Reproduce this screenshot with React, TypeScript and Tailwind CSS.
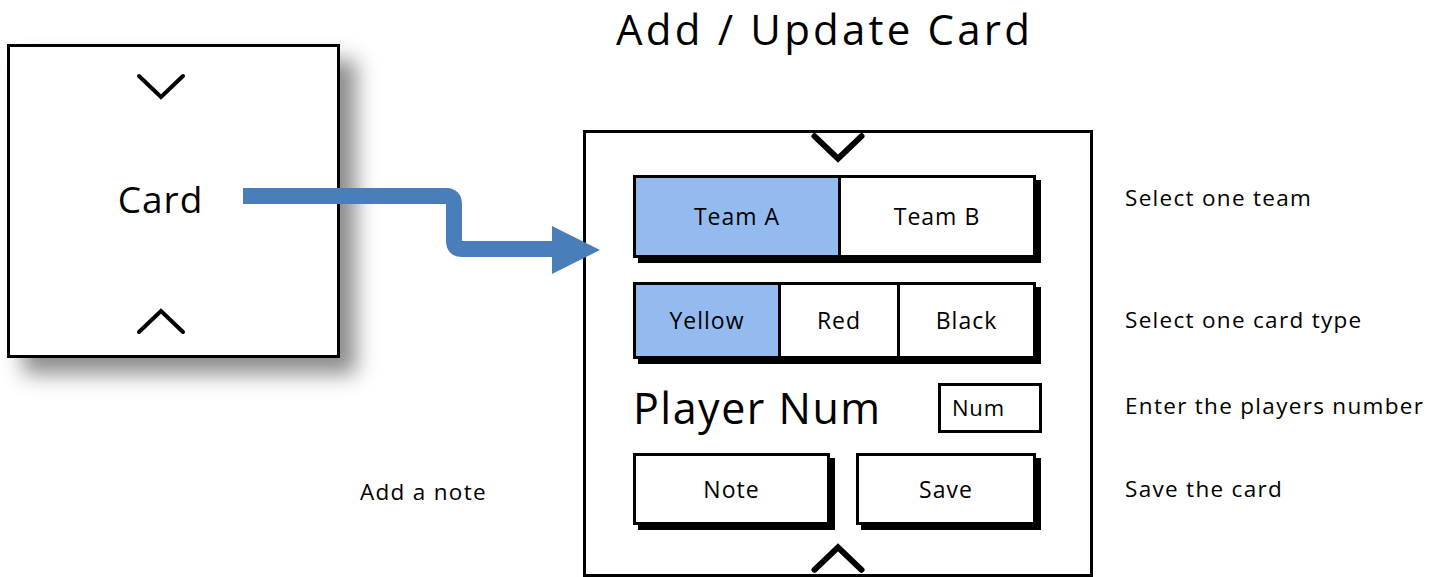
import { ReactNode } from "react";

const Chevron = ({ up, big }: { up?: boolean; big?: boolean }) => (
	<svg
		className={big ? "w-[54px] h-[30px] block" : "w-[50px] h-[28px] block"}
		viewBox="0 0 50 28"
		fill="none"
		stroke="black"
		strokeWidth={big ? 5.5 : 4}
		strokeLinecap="round"
		strokeLinejoin="miter"
	>
		{up ? <path d="M3 25 L25 4 L47 25" /> : <path d="M3 3 L25 24 L47 3" />}
	</svg>
);

const Segment = ({
	children,
	active,
	className,
}: {
	children: ReactNode;
	active?: boolean;
	className?: string;
}) => (
	<div
		className={`flex items-center justify-center text-[23px] tracking-[1px] ${
			active ? "bg-[#94bbef]" : "bg-white"
		} ${className ?? ""}`}
	>
		{children}
	</div>
);

const Note = ({ children, className }: { children: ReactNode; className?: string }) => (
	<div className={`text-[22.5px] leading-[28px] tracking-[1.3px] whitespace-nowrap ${className ?? ""}`}>
		{children}
	</div>
);

export default function App() {
	return (
		<div className="relative w-[1443px] h-[577px] overflow-hidden bg-white flex text-black font-['Open_Sans',sans-serif]">
			{/* small card */}
			<div className="pl-[7px] pt-[44px] shrink-0">
				<div className="w-[333px] h-[314px] border-[3px] border-black bg-white shadow-[16px_16px_20px_rgba(0,0,0,0.45)] flex flex-col items-center justify-between pt-[26px] pb-[20px] pr-[26px]">
					<Chevron />
					<div className="text-[37px] leading-none tracking-[1px] mb-[12px]">Card</div>
					<Chevron up />
				</div>
			</div>

			{/* note label */}
			<div className="w-[243px] shrink-0 pl-[20px] pt-[478px]">
				<Note>Add a note</Note>
			</div>

			{/* editor */}
			<div className="w-[510px] shrink-0 flex flex-col">
				<div className="h-[130px] pl-[33px] pt-[4px]">
					<h1 className="text-[42px] leading-[50px] tracking-[3.2px]">Add / Update Card</h1>
				</div>
				<div className="h-[448px] border-[3px] border-black flex flex-col pl-[47px]">
					<div className="flex justify-center -ml-[47px]">
						<Chevron big />
					</div>
					<div className="mt-[12px] w-[403px] h-[83px] flex border-[3px] border-black shadow-[5px_5px_0_#000]">
						<Segment active className="w-[205px] border-r-[3px] border-black">
							Team A
						</Segment>
						<Segment className="flex-1">Team B</Segment>
					</div>
					<div className="mt-[24px] w-[403px] h-[77px] flex border-[3px] border-black shadow-[5px_5px_0_#000]">
						<Segment active className="w-[145px] border-r-[3px] border-black">
							Yellow
						</Segment>
						<Segment className="w-[119px] border-r-[3px] border-black">Red</Segment>
						<Segment className="flex-1">Black</Segment>
					</div>
					<div className="mt-[24px] w-[409px] flex items-center justify-between">
						<div className="text-[43px] leading-[50px] tracking-[1.5px]">Player Num</div>
						<div className="w-[104px] h-[50px] border-[3px] border-black flex items-center pl-[11px] text-[22px] tracking-[0.8px]">
							Num
						</div>
					</div>
					<div className="mt-[20px] w-[410px] flex justify-between">
						<div className="w-[197px] h-[72px] border-[3px] border-black shadow-[5px_5px_0_#000] flex items-center justify-center text-[23px] tracking-[1px]">
							Note
						</div>
						<div className="w-[180px] h-[72px] border-[3px] border-black shadow-[5px_5px_0_#000] flex items-center justify-center text-[23px] tracking-[1px] mr-[7px]">
							Save
						</div>
					</div>
					<div className="mt-auto flex justify-center -ml-[47px] pb-[1px]">
						<Chevron up big />
					</div>
				</div>
			</div>

			{/* annotations */}
			<div className="pl-[32px] pt-[184px] flex flex-col">
				<Note>Select one team</Note>
				<Note className="mt-[94px]">Select one card type</Note>
				<Note className="mt-[58px]">Enter the players number</Note>
				<Note className="mt-[55px]">Save the card</Note>
			</div>

			{/* connector arrow */}
			<svg className="absolute inset-0 w-full h-full pointer-events-none" viewBox="0 0 1443 577">
				<path
					d="M243 196 H446 Q454 196 454 204 V241 Q454 249 462 249 H556"
					fill="none"
					stroke="#4a7ebb"
					strokeWidth={16}
				/>
				<polygon points="552,226 600,250 552,274" fill="#4a7ebb" />
			</svg>
		</div>
	);
}
